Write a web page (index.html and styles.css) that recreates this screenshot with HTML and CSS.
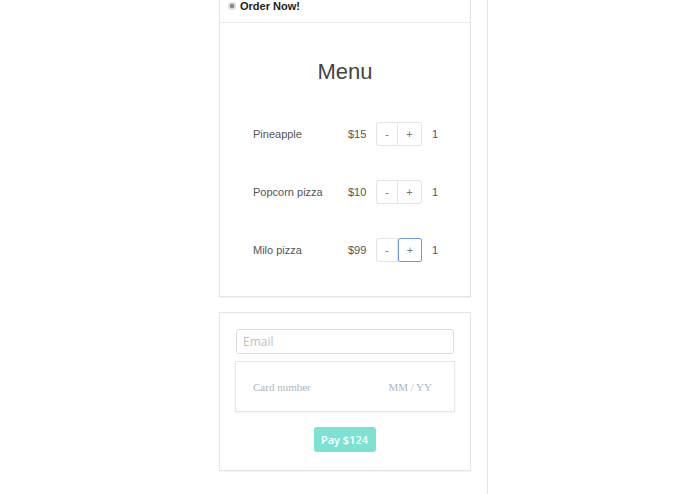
FILE: index.html
```html
<!DOCTYPE html>
<html>
<head>
<meta charset="utf-8">
<link rel="stylesheet" href="styles.css">
</head>
<body>
<div class="page">
  <div class="column">
    <div class="card menu-card">
      <div class="card-header">
        <span class="dot"></span>
        <span class="title">Order Now!</span>
      </div>
      <div class="menu-body">
        <h1 class="menu-title">Menu</h1>
        <div class="item">
          <span class="name">Pineapple</span>
          <span class="price">$15</span>
          <span class="stepper"><button class="btn">-</button><button class="btn">+</button></span>
          <span class="qty">1</span>
        </div>
        <div class="item">
          <span class="name">Popcorn pizza</span>
          <span class="price">$10</span>
          <span class="stepper"><button class="btn">-</button><button class="btn">+</button></span>
          <span class="qty">1</span>
        </div>
        <div class="item">
          <span class="name">Milo pizza</span>
          <span class="price">$99</span>
          <span class="stepper"><button class="btn">-</button><button class="btn focus">+</button></span>
          <span class="qty">1</span>
        </div>
      </div>
    </div>
    <div class="card pay-card">
      <div class="email">Email</div>
      <div class="card-element">
        <span class="card-number">Card number</span>
        <span class="card-exp">MM / YY</span>
      </div>
      <div class="pay-row"><button class="pay">Pay $124</button></div>
    </div>
  </div>
</div>
</body>
</html>
```
FILE: styles.css
```css
html, body {
  margin: 0;
  padding: 0;
  background: #fff;
  height: 100%;
}
body {
  font-family: "Liberation Sans", Arial, sans-serif;
  color: #555;
  overflow: hidden;
}
.page {
  display: flex;
  width: 487px;
  height: 494px;
  border-right: 1px solid #e6e6e6;
  box-sizing: content-box;
}
.column {
  margin-left: 219px;
  width: 252px;
  display: flex;
  flex-direction: column;
  gap: 15px;
}
.card {
  border: 1px solid #e4e4e4;
  box-sizing: border-box;
  background: #fff;
  box-shadow: 0 1px 1px rgba(0,0,0,0.04);
}
.menu-card {
  border-top: none;
  height: 297px;
}
.card-header {
  height: 22px;
  border-bottom: 1px solid #ececec;
  display: flex;
  align-items: flex-start;
  padding-left: 8px;
  gap: 4px;
  box-sizing: content-box;
}
.dot {
  width: 8px;
  height: 8px;
  border-radius: 50%;
  background: radial-gradient(circle, #8a8a8a 0 2px, #dcdcdc 2.5px);
  margin-top: 2px;
}
.title {
  font-weight: bold;
  font-size: 11px;
  color: #222;
  line-height: 13px;
}
.menu-body {
  padding: 0 0 0 33px;
}
.menu-title {
  margin: 37px 0 0 -33px;
  text-align: center;
  font-weight: normal;
  font-size: 22px;
  line-height: 24px;
  color: #444;
  height: 24px;
}
.item {
  display: flex;
  align-items: center;
  height: 24px;
  margin-top: 34px;
  font-size: 11px;
  color: #555;
}
.item:first-of-type {
  margin-top: 38px;
}
.name {
  width: 95px;
}
.price {
  width: 28px;
}
.stepper {
  display: flex;
  width: 46px;
}
.btn {
  width: 23px;
  height: 24px;
  border: 1px solid #e3e3e3;
  background: #fff;
  font-family: "Liberation Sans", Arial, sans-serif;
  font-size: 11px;
  color: #777;
  padding: 0;
  border-radius: 0;
}
.btn:first-child {
  border-radius: 3px 0 0 3px;
  width: 22px;
}
.btn:last-child {
  border-left: none;
  border-radius: 0 3px 3px 0;
  width: 24px;
}
.btn.focus {
  border: 1px solid #6d98e3;
  border-radius: 2px;
}
.qty {
  margin-left: 10px;
}
.pay-card {
  height: 159px;
  padding: 16px 16px 0 16px;
}
.email {
  height: 25px;
  box-sizing: border-box;
  border: 1px solid #dcdcdc;
  border-radius: 3px;
  font-family: "Open Sans", sans-serif;
  font-size: 12px;
  color: #c0c0c0;
  padding-left: 6px;
  line-height: 23px;
}
.card-element {
  margin: 7px -1px 0 -1px;
  height: 51px;
  box-sizing: border-box;
  border: 1px solid #e6e6e6;
  box-shadow: 0 1px 2px rgba(0,0,0,0.06);
  display: flex;
  align-items: center;
  justify-content: space-between;
  padding: 0 22px 0 17px;
  font-family: "Liberation Serif", "Times New Roman", serif;
  font-size: 11px;
  color: #aab7c4;
}
.pay-row {
  display: flex;
  justify-content: center;
  margin-top: 15px;
  padding-right: 1px;
}
.pay {
  width: 62px;
  height: 25px;
  border: none;
  border-radius: 3px;
  background: #7ee2d3;
  color: #fff;
  font-family: "Open Sans", sans-serif;
  font-weight: 600;
  font-size: 11px;
  padding: 0;
}
```
